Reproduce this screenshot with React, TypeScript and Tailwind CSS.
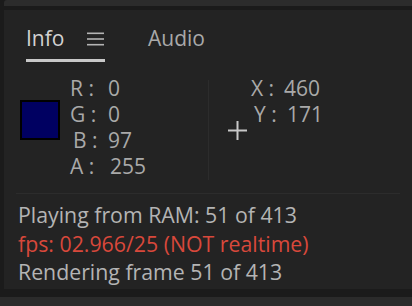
import React from "react";

export default function App() {
  const font = { fontFamily: '"Open Sans", "Noto Sans", sans-serif' };
  return (
    <div className="w-[412px] h-[306px] overflow-hidden bg-[#1b1b1b] flex flex-col" style={font}>
      <div className="h-[6px] ml-[4px] bg-[#2c2c2c] rounded-tl-[3px]" />
      <div className="h-[4px] bg-[#1b1b1b]" />
      <div className="flex h-[279px]">
        <div className="w-[4px] bg-[#1b1b1b]" />
        <div className="flex-1 bg-[#232323] flex flex-col">
          {/* Tabs */}
          <div className="flex items-end pl-[22px] pt-[14px] h-[52px]">
            <div className="flex flex-col w-[79px]">
              <div className="flex items-center h-[32px] pb-[4px]">
                <span className="text-[21px] leading-none text-[#d2d2d2]">Info</span>
                <svg className="ml-[23px] mt-[2px]" width="17" height="14" viewBox="0 0 17 14">
                  <rect x="0" y="0.5" width="17" height="1.6" fill="#b4b4b4" />
                  <rect x="0" y="6.2" width="17" height="1.6" fill="#b4b4b4" />
                  <rect x="0" y="11.9" width="17" height="1.6" fill="#b4b4b4" />
                </svg>
              </div>
              <div className="h-[3px] bg-[#c8c8c8] mt-[3px]" />
            </div>
            <div className="ml-[43px] h-[32px] flex items-center text-[21px] leading-none text-[#a9a9a9] mb-[6px] pb-[4px]">
              Audio
            </div>
          </div>
          {/* Info body */}
          <div className="flex mt-[13px] h-[112px]">
            <div className="flex items-start pl-[16px] w-[204px]">
              <div className="mt-[25px] w-[40px] h-[40px] bg-[#000061] border-2 border-black" />
              <div className="ml-[10px] flex flex-col text-[21px] leading-[26px] text-[#a9a9a9]">
                <div className="flex"><span className="w-[38px]">R :</span><span>0</span></div>
                <div className="flex"><span className="w-[38px]">G :</span><span>0</span></div>
                <div className="flex"><span className="w-[38px] pl-[3px]">B :</span><span>97</span></div>
                <div className="flex"><span className="w-[40px]">A :</span><span>255</span></div>
              </div>
            </div>
            <div className="w-[1px] bg-[#2c2c2c] mt-[5px] h-[100px]" />
            <div className="flex-1 relative">
              <svg className="absolute left-[19px] top-[46px]" width="19" height="19" viewBox="0 0 19 19">
                <rect x="8.5" y="0" width="2" height="19" fill="#c8c8c8" />
                <rect x="0" y="8.5" width="19" height="2" fill="#c8c8c8" />
              </svg>
              <div className="ml-[42px] flex flex-col text-[21px] leading-[26px] text-[#a9a9a9]">
                <div className="flex"><span className="w-[33px]">X :</span><span>460</span></div>
                <div className="flex"><span className="w-[36px] pl-[3px]">Y :</span><span>171</span></div>
              </div>
            </div>
          </div>
          <div className="mx-[12px] mt-[6px] h-[1px] bg-[#2c2c2c]" />
          <div className="pl-[14px] pt-[7px] text-[21.3px] leading-[28.5px] text-[#b4b4b4]">
            <div>Playing from RAM: 51 of 413</div>
            <div className="text-[#d8483b]">fps: 02.966/25 (NOT realtime)</div>
            <div>Rendering frame 51 of 413</div>
          </div>
        </div>
      </div>
      <div className="h-[8px] bg-[#1b1b1b]" />
      <div className="flex-1 bg-[#2b2b2b]" />
    </div>
  );
}
